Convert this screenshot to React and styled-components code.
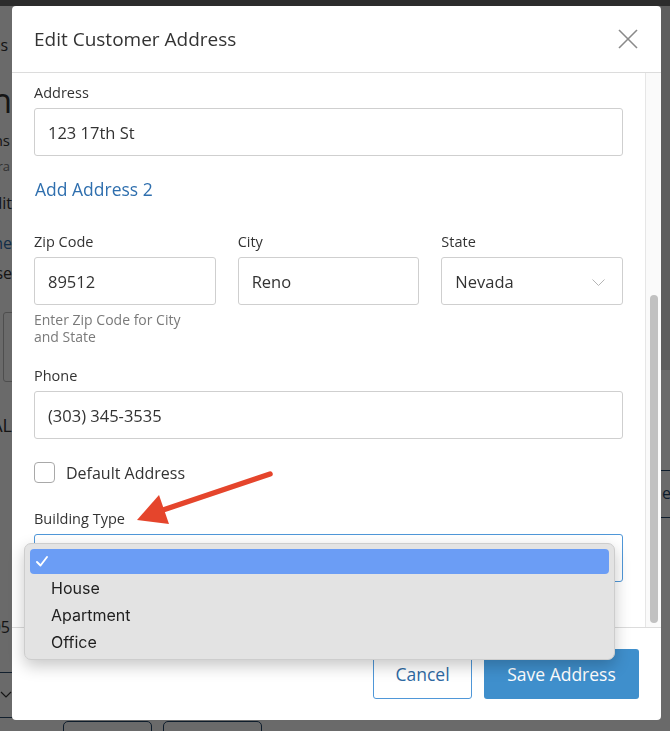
import React, { useLayoutEffect, useRef, useState } from "react";
import styled, { createGlobalStyle } from "styled-components";

const GlobalStyle = createGlobalStyle`
  html, body {
    margin: 0;
    padding: 0;
    overflow: hidden;
  }
  body {
    font-family: "Open Sans", "Noto Sans", sans-serif;
    color: #333;
  }
  * {
    box-sizing: border-box;
  }
`;

const hiddenFields = [
  { label: "Company", value: "" },
  { label: "Email", value: "jane.smith@example.com" },
];

const menuOptions = ["House", "Apartment", "Office"];

const App = () => {
  const bodyRef = useRef(null);
  const [thumb, setThumb] = useState({ top: 0, height: 0 });

  useLayoutEffect(() => {
    // modal body is scrolled to the bottom in the screenshot
    const el = bodyRef.current;
    if (!el) return;
    el.scrollTop = el.scrollHeight;
    const track = el.clientHeight - 8;
    setThumb({
      top: 4 + (el.scrollTop / el.scrollHeight) * track,
      height: (el.clientHeight / el.scrollHeight) * track,
    });
  }, []);

  return (
    <>
      <GlobalStyle />
      <Page>
        <TopBar />
        <PageMain>
          <LeftStrip>
            <BgLine $mt={29} $size={16} $pr={4}>Addresses</BgLine>
            <BgLine $mt={25} $size={34} $lh={40} $pr={0}>Reno Location</BgLine>
            <BgLine $mt={10} $size={15} $pr={2}>Quotations</BgLine>
            <BgLine $mt={7} $size={13} $lh={18} $pr={2} $muted>Contract Terra</BgLine>
            <BgLine $mt={18} $size={16} $pr={0}>Edit</BgLine>
            <BgLine $mt={20} $size={16} $pr={0} $link>Phone</BgLine>
            <BgLine $mt={10} $size={16} $pr={0}>Close</BgLine>
            <BgBox />
            <BgLine $mt={31} $size={18} $lh={24} $pr={0}>TOTAL</BgLine>
            <BgLine $mt={180} $size={16} $pr={2}>2305</BgLine>
            <BgSelect>
              <svg width="12" height="8" viewBox="0 0 12 8">
                <polyline points="1,1 6,6 11,1" fill="none" stroke="#333" strokeWidth="1.2" />
              </svg>
            </BgSelect>
          </LeftStrip>
          <Center>
            <BgButtons>
              <BgButton $w={89} />
              <BgButton $w={99} />
            </BgButtons>
          </Center>
          <RightStrip>
            <BgPanel />
            <BgTab>e</BgTab>
          </RightStrip>
        </PageMain>
      </Page>

      <Backdrop />

      <Dialog>
        <DialogHeader>
          <Title>Edit Customer Address</Title>
          <CloseButton aria-label="Close">
            <svg width="20" height="20" viewBox="0 0 20 20">
              <line x1="1" y1="1" x2="19" y2="19" stroke="#8a8a8a" strokeWidth="1.6" />
              <line x1="19" y1="1" x2="1" y2="19" stroke="#8a8a8a" strokeWidth="1.6" />
            </svg>
          </CloseButton>
        </DialogHeader>

        <BodyWrap>
          <DialogBody ref={bodyRef}>
            <Field $mb={16}>
              <Label>Address Name</Label>
              <TextInput defaultValue="Home" />
            </Field>
            <Row2 $mb={16}>
              <Field>
                <Label>First Name</Label>
                <TextInput defaultValue="Jane" />
              </Field>
              <Field>
                <Label>Last Name</Label>
                <TextInput defaultValue="Smith" />
              </Field>
            </Row2>
            {hiddenFields.map((f) => (
              <Field key={f.label} $mb={16}>
                <Label>{f.label}</Label>
                <TextInput defaultValue={f.value} />
              </Field>
            ))}

            <Field $mb={21}>
              <Label>Address</Label>
              <TextInput defaultValue="123 17th St" />
            </Field>

            <AddLink>Add Address 2</AddLink>

            <Row3>
              <Field>
                <Label>Zip Code</Label>
                <TextInput defaultValue="89512" />
                <HelpText>Enter Zip Code for City and State</HelpText>
              </Field>
              <Field>
                <Label>City</Label>
                <TextInput defaultValue="Reno" />
              </Field>
              <Field>
                <Label>State</Label>
                <SelectBox>
                  <span>Nevada</span>
                  <svg width="13" height="8" viewBox="0 0 13 8">
                    <polyline points="0.5,0.5 6.5,6.5 12.5,0.5" fill="none" stroke="#b5b5b5" strokeWidth="1" />
                  </svg>
                </SelectBox>
              </Field>
            </Row3>

            <Field $mb={23}>
              <Label>Phone</Label>
              <TextInput defaultValue="(303) 345-3535" />
            </Field>

            <CheckRow>
              <CheckBox />
              <span>Default Address</span>
            </CheckRow>

            <Field>
              <Label>Building Type</Label>
              <SelectBox $focused />
            </Field>
          </DialogBody>
          <ScrollTrack>
            <ScrollThumb style={{ top: thumb.top, height: thumb.height }} />
          </ScrollTrack>
        </BodyWrap>

        <DialogFooter>
          <OutlineButton>Cancel</OutlineButton>
          <PrimaryButton>Save Address</PrimaryButton>
        </DialogFooter>
      </Dialog>

      <Menu>
        {["", ...menuOptions].map((opt, i) => (
          <MenuItem key={opt || "blank"} $selected={i === 0}>
            {i === 0 && (
              <Check width="12" height="11" viewBox="0 0 12 11">
                <polyline points="1,6 4.5,9.5 11,1" fill="none" stroke="#fff" strokeWidth="1.9" strokeLinecap="round" strokeLinejoin="round" />
              </Check>
            )}
            {opt}
          </MenuItem>
        ))}
      </Menu>

      <Annotation width="670" height="731" viewBox="0 0 670 731">
        <line x1="270" y1="474" x2="160" y2="511" stroke="#e5452c" strokeWidth="5.5" strokeLinecap="round" />
        <polygon points="137,520 159,495 169,524" fill="#e5452c" />
      </Annotation>
    </>
  );
};

export default App;

const Page = styled.div`
  width: 100vw;
  height: 100vh;
  display: flex;
  flex-direction: column;
  background: #fff;
  overflow: hidden;
`;

const TopBar = styled.div`
  height: 6px;
  flex-shrink: 0;
  background: #6a6a6a;
`;

const PageMain = styled.div`
  flex: 1;
  display: flex;
  min-height: 0;
`;

const LeftStrip = styled.div`
  width: 12px;
  flex-shrink: 0;
  overflow: hidden;
  display: flex;
  flex-direction: column;
`;

const BgLine = styled.div`
  display: flex;
  justify-content: flex-end;
  white-space: nowrap;
  margin-top: ${(p) => p.$mt}px;
  padding-right: ${(p) => p.$pr}px;
  font-size: ${(p) => p.$size}px;
  line-height: ${(p) => p.$lh || 20}px;
  color: ${(p) => (p.$link ? "#2f6fae" : p.$muted ? "#777" : "#333")};
`;

const BgBox = styled.div`
  margin: 29px 0 0 3px;
  width: 40px;
  height: 70px;
  border: 1px solid #bbb;
  border-radius: 3px;
  flex-shrink: 0;
`;

const BgSelect = styled.div`
  margin-top: 35px;
  height: 46px;
  width: 40px;
  flex-shrink: 0;
  border-top: 1px solid #2c4e70;
  border-bottom: 1px solid #2c4e70;
  display: flex;
  align-items: center;
`;

const Center = styled.div`
  flex: 1;
  display: flex;
  flex-direction: column;
  justify-content: flex-end;
`;

const BgButtons = styled.div`
  display: flex;
  gap: 11px;
  padding-left: 51px;
  margin-bottom: -30px;
`;

const BgButton = styled.div`
  width: ${(p) => p.$w}px;
  height: 40px;
  border: 1.5px solid #23476b;
  border-radius: 5px;
`;

const RightStrip = styled.div`
  width: 9px;
  flex-shrink: 0;
  display: flex;
  flex-direction: column;
`;

const BgPanel = styled.div`
  height: 364px;
  background: #e2e2e2;
`;

const BgTab = styled.div`
  margin-top: 100px;
  height: 48px;
  border-top: 1.5px solid #23476b;
  border-bottom: 1.5px solid #23476b;
  font-size: 16px;
  line-height: 45px;
  color: #23476b;
  padding-left: 1px;
`;

const Backdrop = styled.div`
  position: fixed;
  inset: 0;
  background: rgba(0, 0, 0, 0.585);
`;

const Dialog = styled.div`
  position: fixed;
  top: 6px;
  left: 12px;
  width: 649px;
  height: 714px;
  background: #fff;
  border-radius: 4px;
  display: flex;
  flex-direction: column;
  overflow: hidden;
`;

const DialogHeader = styled.div`
  height: 67px;
  flex-shrink: 0;
  border-bottom: 1px solid #dcdcdc;
  display: flex;
  align-items: center;
  justify-content: space-between;
  padding: 0 22px;
`;

const Title = styled.h2`
  margin: 0;
  font-size: 19px;
  font-weight: 400;
  color: #333;
`;

const CloseButton = styled.button`
  border: 0;
  background: transparent;
  padding: 0;
  display: flex;
  margin-top: -1px;
  margin-right: 1px;
`;

const BodyWrap = styled.div`
  flex: 1;
  min-height: 0;
  display: flex;
`;

const DialogBody = styled.div`
  flex: 1;
  min-width: 0;
  overflow: hidden;
  padding: 22px 22px 45px 22px;
  display: flex;
  flex-direction: column;
`;

const ScrollTrack = styled.div`
  position: relative;
  width: 16px;
  flex-shrink: 0;
  background: #fafafa;
  border-left: 1px solid #e6e6e6;
`;

const ScrollThumb = styled.div`
  position: absolute;
  left: 4px;
  width: 8px;
  border-radius: 4px;
  background: #c1c1c1;
`;

const Field = styled.div`
  display: flex;
  flex-direction: column;
  flex-shrink: 0;
  margin-bottom: ${(p) => p.$mb || 0}px;
`;

const Row2 = styled.div`
  display: grid;
  grid-template-columns: 1fr 1fr;
  gap: 22px;
  flex-shrink: 0;
  margin-bottom: ${(p) => p.$mb || 0}px;
`;

const Row3 = styled.div`
  display: grid;
  grid-template-columns: repeat(3, 1fr);
  gap: 22px;
  align-items: start;
  flex-shrink: 0;
  margin-bottom: 21px;
`;

const Label = styled.label`
  font-size: 14.5px;
  line-height: 20px;
  margin-bottom: 5px;
  color: #333;
`;

const TextInput = styled.input`
  height: 48px;
  width: 100%;
  border: 1px solid #cfcfcf;
  border-radius: 3px;
  padding: 0 13px;
  font-family: inherit;
  font-size: 16.5px;
  color: #333;
  outline: none;
  background: #fff;
`;

const SelectBox = styled.div`
  height: 48px;
  border: 1px solid ${(p) => (p.$focused ? "#4f97d8" : "#cfcfcf")};
  border-radius: 3px;
  padding: 0 17px 0 13px;
  display: flex;
  align-items: center;
  justify-content: space-between;
  font-size: 16.5px;
  color: #333;

  svg {
    margin-top: 4px;
  }
`;

const HelpText = styled.div`
  margin-top: 6px;
  font-size: 14px;
  line-height: 17px;
  color: #7a7a7a;
  max-width: 168px;
`;

const AddLink = styled.a`
  display: block;
  flex-shrink: 0;
  margin: 0 0 31px 1px;
  font-size: 17.5px;
  line-height: 24px;
  color: #2f6fae;
  cursor: pointer;
`;

const CheckRow = styled.label`
  display: flex;
  align-items: center;
  gap: 11px;
  flex-shrink: 0;
  height: 21px;
  margin-bottom: 26px;
  font-size: 16px;
  color: #333;
`;

const CheckBox = styled.span`
  width: 21px;
  height: 21px;
  border: 1px solid #a9a9a9;
  border-radius: 4px;
  background: #fff;
`;

const DialogFooter = styled.div`
  height: 93px;
  flex-shrink: 0;
  border-top: 1px solid #dcdcdc;
  display: flex;
  align-items: center;
  justify-content: flex-end;
  gap: 12px;
  padding: 0 22px 1px 0;
`;

const OutlineButton = styled.button`
  height: 50px;
  width: 99px;
  border: 1px solid #4f97d8;
  border-radius: 3px;
  background: #fff;
  color: #2f6aa3;
  font-family: inherit;
  font-size: 17.5px;
`;

const PrimaryButton = styled.button`
  height: 50px;
  width: 155px;
  border: 0;
  border-radius: 3px;
  background: #3f8fcc;
  color: #fff;
  font-family: inherit;
  font-size: 17.5px;
`;

const Menu = styled.div`
  position: fixed;
  left: 24px;
  top: 543px;
  width: 591px;
  height: 117px;
  padding: 5px;
  background: #e3e3e3;
  border: 1px solid #cdcdcd;
  border-radius: 7px;
  box-shadow: 0 6px 16px rgba(0, 0, 0, 0.22);
  font-family: Inter, "Liberation Sans", sans-serif;
`;

const MenuItem = styled.div`
  position: relative;
  height: ${(p) => (p.$selected ? 25 : 27)}px;
  display: flex;
  align-items: center;
  padding-left: 21px;
  border-radius: 4px;
  font-size: 16px;
  color: #1f1f1f;
  background: ${(p) => (p.$selected ? "#6b9df5" : "transparent")};
`;

const Check = styled.svg`
  position: absolute;
  left: 6px;
  top: 7px;
`;

const Annotation = styled.svg`
  position: fixed;
  left: 0;
  top: 0;
  pointer-events: none;
`;
